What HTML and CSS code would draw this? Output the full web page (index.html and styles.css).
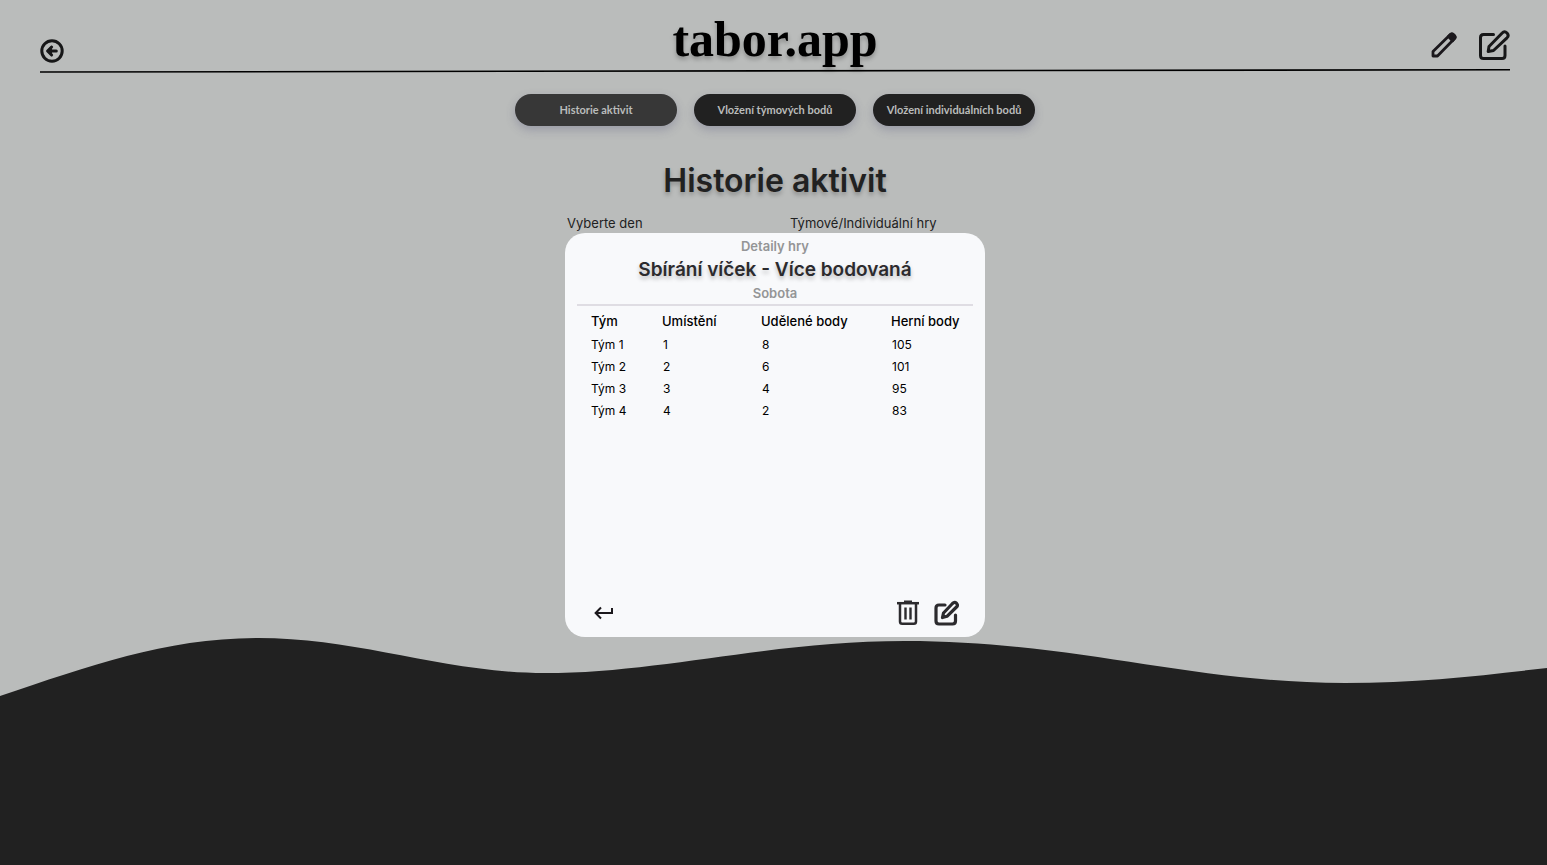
FILE: index.html
```html
<!DOCTYPE html>
<html lang="cs">
<head>
<meta charset="utf-8">
<title>tabor.app</title>
<meta name="viewport" content="width=device-width, initial-scale=1">
<link rel="stylesheet" href="styles.css">
</head>
<body class="page">
<svg class="wave" viewBox="0 0 1547 227" preserveAspectRatio="none" aria-hidden="true">
  <path fill="#212121" d="M0 58C90 28 165 0 258 0C360 0 445 35 545 35C660 35 770 3 905 3C1075 3 1190 45 1345 45C1420 45 1485 37 1547 30V227H0Z"/>
</svg>
<header class="header">
  <div class="header-row">
    <div class="header-side">
      <button class="icon-button" type="button" aria-label="Zpět">
        <svg width="24" height="24" viewBox="0 0 24 24" fill="none" stroke="#171718" stroke-linecap="round" stroke-linejoin="round">
          <circle cx="12" cy="12" r="10.2" stroke-width="3"/>
          <path stroke-width="3" d="M16.3 12H8.2M11.6 8L7.6 12L11.6 16"/>
          <path fill="#171718" stroke="none" d="M6.500 12L12 6.500V17.500Z"/>
        </svg>
      </button>
    </div>
    <a class="logo" href="#">tabor.app</a>
    <div class="header-side header-actions">
      <button class="icon-button" type="button" aria-label="Kreslit">
        <svg width="26" height="26" viewBox="0 0 26 26" fill="none" stroke="#1b181c" stroke-width="2.800" stroke-linejoin="round">
          <path d="M2 24V19.500L19.300 2.600Q21 1.300 22.500 2.800L23.500 3.800Q24.800 5.200 23.300 6.700L6.500 24Z"/>
          <path fill="#1b181c" d="M17.500 4.500L19.300 2.600Q21 1.300 22.500 2.800L23.500 3.800Q24.800 5.200 23.300 6.700L21.500 8.800Z"/>
        </svg>
      </button>
      <button class="icon-button" type="button" aria-label="Upravit">
        <svg width="32" height="32" viewBox="0 0 32 32" fill="none" stroke="#171718" stroke-width="3" stroke-linecap="round" stroke-linejoin="round">
          <path d="M15.500 5.500H5.500Q2.500 5.500 2.500 8.500V26.500Q2.500 29.500 5.500 29.500H24Q27 29.500 27 26.500V17"/>
          <path d="M11 17.500L24.200 4Q26.500 1.500 29 4Q31.300 6.500 29 8.800L15.500 21.500L10.200 22.500Z"/>
        </svg>
      </button>
    </div>
  </div>
  <svg class="header-line" viewBox="0 0 1470 4" preserveAspectRatio="none" aria-hidden="true">
    <path d="M0 3L1470 .8" stroke="#000" stroke-width="1.600"/>
  </svg>
</header>
<main class="main">
  <nav class="tabs">
    <button class="tab tab-active" type="button">Historie aktivit</button>
    <button class="tab" type="button">Vložení týmových bodů</button>
    <button class="tab" type="button">Vložení individuálních bodů</button>
  </nav>
  <h1 class="title">Historie aktivit</h1>
  <div class="content">
    <div class="filters">
      <span>Vyberte den</span>
      <span>Týmové/Individuální hry</span>
    </div>
    <section class="card" role="dialog" aria-labelledby="game-name">
      <div class="card-head">
        <p class="caption">Detaily hry</p>
        <h2 class="game" id="game-name">Sbírání víček - Více bodovaná</h2>
        <p class="caption">Sobota</p>
      </div>
      <table class="results">
        <colgroup><col class="col-team"><col class="col-place"><col class="col-awarded"><col></colgroup>
        <thead>
          <tr><th>Tým</th><th>Umístění</th><th>Udělené body</th><th>Herní body</th></tr>
        </thead>
        <tbody>
          <tr><td>Tým 1</td><td>1</td><td>8</td><td>105</td></tr>
          <tr><td>Tým 2</td><td>2</td><td>6</td><td>101</td></tr>
          <tr><td>Tým 3</td><td>3</td><td>4</td><td>95</td></tr>
          <tr><td>Tým 4</td><td>4</td><td>2</td><td>83</td></tr>
        </tbody>
      </table>
      <div class="card-actions">
        <button class="icon-button" type="button" aria-label="Zavřít">
          <svg width="20" height="14" viewBox="0 0 20 14" fill="none" stroke="#1b181c" stroke-width="2">
            <path d="M18 2V7H2M7 1.500L1.600 7L7 12.500"/>
          </svg>
        </button>
        <div class="card-tools">
          <button class="icon-button" type="button" aria-label="Smazat">
            <svg width="22" height="26" viewBox="0 0 22 26" fill="none" stroke="#2c2b2e">
              <path stroke-width="2.500" stroke-linejoin="round" d="M3 4V21.500Q3 23.800 5.200 23.800H16.800Q19 23.800 19 21.500V4"/>
              <path stroke-width="2.500" d="M0 3.200H22"/>
              <path stroke-width="2" d="M7 1.500H15"/>
              <path stroke-width="2.400" d="M8.500 7.500V19.500M13.500 7.500V19.500"/>
            </svg>
          </button>
          <button class="icon-button" type="button" aria-label="Upravit hru">
            <svg width="25" height="26" viewBox="0 0 25 26" fill="none" stroke="#2c2b2e" stroke-width="3.200" stroke-linecap="round" stroke-linejoin="round">
              <path d="M11 5H5Q2 5 2 8V21Q2 24 5 24H18.500Q21.500 24 21.500 21V15"/>
              <path d="M9.500 13L18.500 3.500Q20.500 1.500 22.500 3.200Q24.300 5.200 22.500 7L13 16.300L8.500 17.500Z"/>
            </svg>
          </button>
        </div>
      </div>
    </section>
  </div>
</main>
</body>
</html>
```
FILE: styles.css
```css
* { box-sizing: border-box; }

.page {
  position: relative;
  margin: 0;
  min-height: 100vh;
  padding: 0 37px 0 40px;
  background: #babcbb;
  font-family: Inter, "Liberation Sans", sans-serif;
  color: #212121;
}

.wave {
  position: absolute;
  left: 0;
  bottom: 0;
  width: 100%;
  height: 227px;
  z-index: -1;
}

.icon-button {
  display: block;
  padding: 0;
  border: 0;
  background: none;
  cursor: pointer;
}

.icon-button svg { display: block; }

.header-row {
  display: flex;
  align-items: flex-end;
  height: 69px;
}

.header-side {
  flex: 1;
  display: flex;
  padding-bottom: 6px;
}

.header-actions {
  justify-content: flex-end;
  align-items: center;
  gap: 21px;
  padding-bottom: 8px;
}

.logo {
  padding-bottom: 2px;
  font: bold 50px/56px "Liberation Serif", serif;
  color: #000;
  text-decoration: none;
  text-shadow: 0 3px 4px rgba(0, 0, 0, 0.25);
}

.header-line {
  display: block;
  width: 100%;
  height: 4px;
}

.main {
  display: flex;
  flex-direction: column;
  align-items: center;
  padding-top: 21px;
}

.tabs {
  display: flex;
  gap: 17px;
}

.tab {
  width: 162px;
  height: 32px;
  padding: 0;
  border: 0;
  border-radius: 16px;
  background: #212121;
  color: #babcbb;
  font: bold 11px/16px Lato, sans-serif;
  box-shadow: 0 4px 10px rgba(80, 80, 120, 0.3);
  cursor: pointer;
}

.tab-active { background: #373737; }

.title {
  margin: 34px 0 0;
  font-size: 32px;
  font-weight: 600;
  line-height: 42px;
  text-shadow: 0 3px 4px rgba(0, 0, 0, 0.25);
}

.content {
  width: 420px;
  max-width: 100%;
  padding: 13px 0 40px;
}

.filters {
  display: grid;
  grid-template-columns: 223px 1fr;
  padding: 0 0 1px 2px;
  font-size: 13px;
  line-height: 17px;
}

.card {
  display: flex;
  flex-direction: column;
  min-height: 404px;
  padding: 4px 12px 11px;
  border-radius: 20px;
  background: #f8f9fb;
}

.card-head {
  padding-bottom: 2px;
  border-bottom: 2px solid #dfdde3;
  text-align: center;
}

.caption {
  margin: 0;
  color: #949596;
  font-size: 13px;
  font-weight: 600;
  line-height: 18px;
}

.game {
  margin: 0;
  color: #2c2b2e;
  font-size: 19px;
  font-weight: 600;
  line-height: 29px;
  text-shadow: 0 3px 4px rgba(0, 0, 0, 0.25);
}

.results {
  width: 100%;
  margin-top: 3px;
  border-collapse: collapse;
  table-layout: fixed;
  color: #000;
}

.col-team { width: 85px; }
.col-place { width: 99px; }
.col-awarded { width: 130px; }

.results th,
.results td {
  padding: 0;
  text-align: left;
  white-space: nowrap;
}

.results th {
  padding-bottom: 1px;
  font-size: 13px;
  font-weight: 500;
  line-height: 24px;
}

.results td {
  padding-left: 1px;
  font-size: 12px;
  font-weight: 400;
  line-height: 22px;
}

.results th:first-child,
.results td:first-child { padding-left: 14px; }

.card-actions {
  display: flex;
  align-items: center;
  justify-content: space-between;
  margin-top: auto;
  padding: 0 14px 0 17px;
}

.card-tools {
  display: flex;
  gap: 15px;
}
```
